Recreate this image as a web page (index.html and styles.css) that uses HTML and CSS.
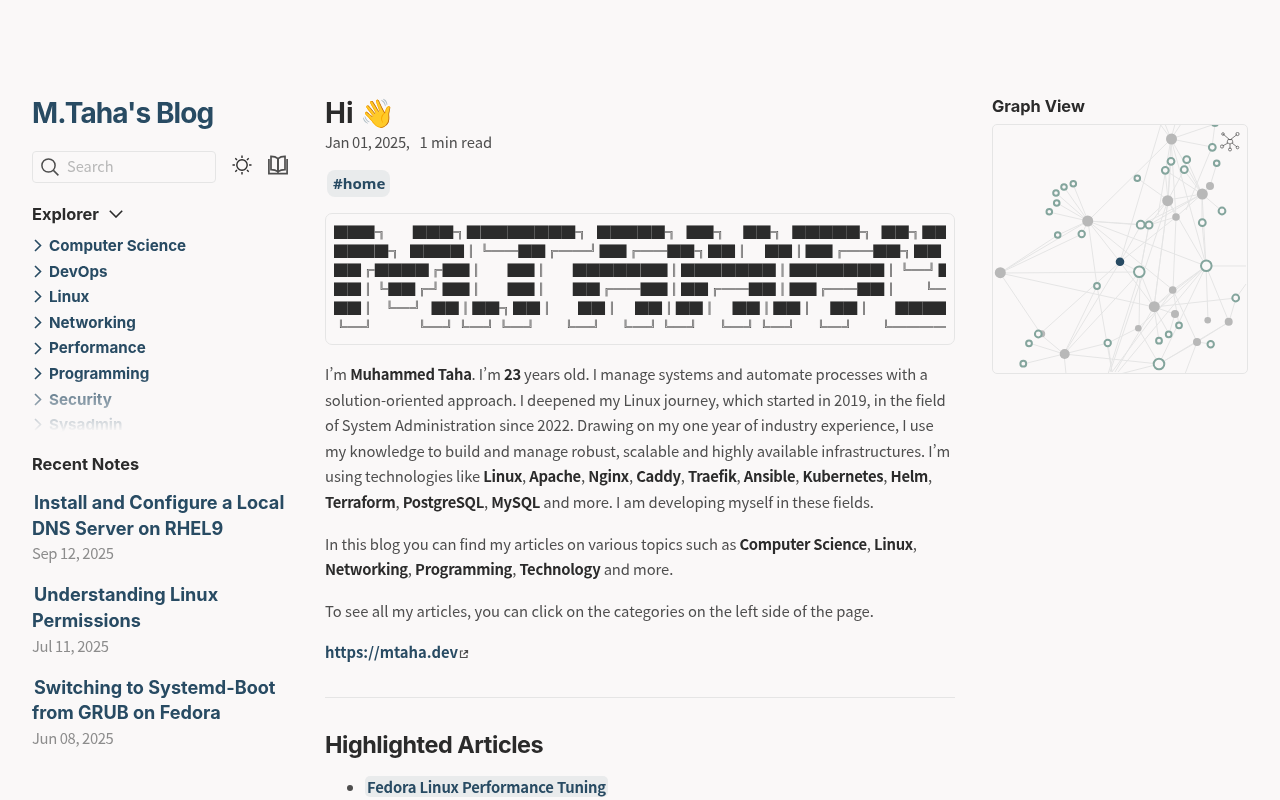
FILE: index.html
```html
<!DOCTYPE html>
<html lang="en">
<head>
<meta charset="utf-8">
<title>Hi</title>
<link rel="stylesheet" href="styles.css">
</head>
<body>
<div class="page">
  <aside class="left">
    <h2 class="site-title">M.Taha's Blog</h2>
    <div class="tools">
      <div class="search">
        <svg class="search-icon" viewBox="0 0 18 18" width="18" height="18"><circle cx="7.5" cy="7.5" r="6.6"/><path d="M12.4 12.4 17.4 17.4"/></svg>
        <span class="search-text">Search</span>
      </div>
      <svg class="sun" viewBox="0 0 20 20" width="20" height="20"><circle cx="10" cy="10" r="5.2"/><path d="M10 0.5v2.4M10 17.1v2.4M0.5 10h2.4M17.1 10h2.4M3.3 3.3l1.7 1.7M15 15l1.7 1.7M3.3 16.7 5 15M15 5l1.7-1.7"/></svg>
      <svg class="book" viewBox="0 0 20 20" width="20" height="20"><path d="M0.9 4v14.6h18.2V4"/><path d="M3 1.4c3 0 5.2.7 7 2.2v13c-1.8-1.3-4-2-7-2z"/><path d="M17 1.4c-3 0-5.2.7-7 2.2v13c1.8-1.3 4-2 7-2z"/></svg>
    </div>
    <div class="explorer-head">
      <h2 class="side-h">Explorer</h2>
      <svg class="fold" viewBox="0 0 14 8" width="14" height="8"><path d="M.8.8 7 7 13.2.8"/></svg>
    </div>
    <ul class="explorer">
      <li class="folder"><svg class="chev" viewBox="0 0 8 13" width="8" height="13"><path d="M1 1l5.5 5.5L1 12"/></svg><span>Computer Science</span></li>
      <li class="folder"><svg class="chev" viewBox="0 0 8 13" width="8" height="13"><path d="M1 1l5.5 5.5L1 12"/></svg><span>DevOps</span></li>
      <li class="folder"><svg class="chev" viewBox="0 0 8 13" width="8" height="13"><path d="M1 1l5.5 5.5L1 12"/></svg><span>Linux</span></li>
      <li class="folder"><svg class="chev" viewBox="0 0 8 13" width="8" height="13"><path d="M1 1l5.5 5.5L1 12"/></svg><span>Networking</span></li>
      <li class="folder"><svg class="chev" viewBox="0 0 8 13" width="8" height="13"><path d="M1 1l5.5 5.5L1 12"/></svg><span>Performance</span></li>
      <li class="folder"><svg class="chev" viewBox="0 0 8 13" width="8" height="13"><path d="M1 1l5.5 5.5L1 12"/></svg><span>Programming</span></li>
      <li class="folder"><svg class="chev" viewBox="0 0 8 13" width="8" height="13"><path d="M1 1l5.5 5.5L1 12"/></svg><span>Security</span></li>
      <li class="folder"><svg class="chev" viewBox="0 0 8 13" width="8" height="13"><path d="M1 1l5.5 5.5L1 12"/></svg><span>Sysadmin</span></li>
    </ul>
    <h2 class="side-h recent-h">Recent Notes</h2>
    <ul class="recent">
      <li><h3 class="note-title"><a>Install and Configure a Local DNS Server on RHEL9</a></h3><p class="note-date">Sep 12, 2025</p></li>
      <li><h3 class="note-title"><a>Understanding Linux Permissions</a></h3><p class="note-date">Jul 11, 2025</p></li>
      <li><h3 class="note-title"><a>Switching to Systemd-Boot from GRUB on Fedora</a></h3><p class="note-date">Jun 08, 2025</p></li>
    </ul>
  </aside>

  <main class="center">
    <h1 class="title">Hi <span class="emoji">👋</span></h1>
    <p class="meta"><span class="date">Jan 01, 2025,</span><span class="meta-sep"></span>1 min read</p>
    <div class="tags"><a class="tag">#home</a></div>
    <pre class="ascii"><code>███╗   ███╗████████╗ █████╗ ██╗  ██╗ █████╗ ██╗███████╗
████╗ ████║╚══██╔══╝██╔══██╗██║  ██║██╔══██╗██║██╔════╝
██╔████╔██║   ██║   ███████║███████║███████║╚═╝███████╗
██║╚██╔╝██║   ██║   ██╔══██║██╔══██║██╔══██║   ╚════██║
██║ ╚═╝ ██║██╗██║   ██║  ██║██║  ██║██║  ██║   ███████║
╚═╝     ╚═╝╚═╝╚═╝   ╚═╝  ╚═╝╚═╝  ╚═╝╚═╝  ╚═╝   ╚══════╝</code></pre>
    <p class="body-p tight">I’m <b>Muhammed Taha</b>. I’m <b>23</b> years old. I manage systems and automate processes with a solution-oriented approach. I deepened my Linux journey, which started in 2019, in the field of System Administration since 2022. Drawing on my one year of industry experience, I use my knowledge to build and manage robust, scalable and highly available infrastructures. I’m using technologies like <b>Linux</b>, <b>Apache</b>, <b>Nginx</b>, <b>Caddy</b>, <b>Traefik</b>, <b>Ansible</b>, <b>Kubernetes</b>, <b>Helm</b>, <b>Terraform</b>, <b>PostgreSQL</b>, <b>MySQL</b> and more. I am developing myself in these fields.</p>
    <p class="body-p tight">In this blog you can find my articles on various topics such as <b>Computer Science</b>, <b>Linux</b>, <b>Networking</b>, <b>Programming</b>, <b>Technology</b> and more.</p>
    <p class="body-p">To see all my articles, you can click on the categories on the left side of the page.</p>
    <p class="body-p"><a class="ext">https://mtaha.dev<svg class="ext-icon" viewBox="0 0 10 10" width="10" height="10"><path d="M4 2H1.5v6.5H8V6"/><path d="M4.5 5.5 8.5 1.5M5.5 1.5h3v3"/></svg></a></p>
    <hr class="rule">
    <h2 class="section">Highlighted Articles</h2>
    <ul class="articles">
      <li><a class="internal">Fedora Linux Performance Tuning</a></li>
    </ul>
  </main>

  <aside class="right">
    <h3 class="side-h graph-h">Graph View</h3>
    <div class="graph">
      <svg class="graph-svg" viewBox="993 125 254 248" width="254" height="248">
        <path class="edges" d="M1171 139L1160 124M1171 139L1165 124M1171 139L1175 124M1171 139L1181 124M1171 139L1215 124M1171 139L1212 147M1171 139L1168 200M1171 139L1158 215M1171 139L1202 194M1171 139L1088 221M1171 139L1206 265M1171 139L1176 217M1137 178L1168 200M1215 124L1212 147M1212 147L1186 210M1088 221L1073 184M1088 221L1064 187M1088 221L1056 193M1088 221L1057 203M1088 221L1049 212M1088 221L1058 235M1088 221L1082 234M1088 221L1141 225M1088 221L1149 225M1088 221L1120 262M1088 221L1000 273M1000 273L1058 235M1000 273L1082 234M1088 221L1206 266M1088 221L1173 290M1088 221L1097 286M1168 200L1165 170M1168 200L1171 161M1168 200L1184 170M1168 200L1202 194M1168 200L1176 217M1168 200L1141 225M1168 200L1149 225M1168 200L1206 266M1168 200L1154 307M1202 194L1222 211M1202 194L1202 223M1202 194L1165 170M1202 194L1184 170M1202 194L1187 160M1202 194L1210 186M1202 194L1141 225M1202 194L1149 225M1202 194L1206 266M1202 194L1176 217M1210 186L1217 163M1176 217L1173 290M1176 217L1149 225M1176 217L1120 262M1120 262L1141 225M1120 262L1140 272M1120 262L1040 334M1120 262L1064 354M1120 262L1154 307M1120 262L1161 124M1000 273L1140 272M1000 273L1154 307M1000 273L1041 334M1140 272L1154 307M1140 272L1139 328M1140 272L1149 225M1140 272L1064 354M1140 272L1108 374M1206 266L1173 290M1206 266L1154 307M1206 266L1246 266M1206 266L1229 322M1206 266L1208 320M1206 266L1159 364M1206 266L1202 223M1206 266L1118 372M1206 266L1138 328M1154 307L1175 314M1154 307L1236 298M1154 307L1159 341M1154 307L1169 334M1154 307L1173 290M1154 307L1115 372M1154 307L1168 200M1173 290L1197 342M1173 290L1112 372M1173 290L1179 325M1175 314L1169 334M1138 328L1159 364M1138 328L1108 343M1108 343L1112 372M1108 343L1064 354M1097 286L1064 354M1097 286L1112 372M1064 354L1023 364M1064 354L1029 343M1064 354L1040 334M1064 354L1159 364M1064 354L1066 374M1159 364L1197 342M1159 364L1229 322M1159 364L1120 374M1197 342L1229 322M1197 342L1211 344M1197 342L1185 374M1236 298L1229 322M1236 298L1246 284M1168 200L1110 372M1149 225L1140 272"/>
        <g class="grey">
          <circle cx="1171.5" cy="139" r="5.5"/><circle cx="1167.7" cy="200.7" r="5.5"/><circle cx="1202.3" cy="194" r="5.5"/><circle cx="1210" cy="186" r="4"/><circle cx="1176" cy="217" r="3.8"/><circle cx="1087.7" cy="221" r="5.5"/><circle cx="1000.3" cy="272.7" r="5.5"/><circle cx="1172.7" cy="290" r="3.8"/><circle cx="1154.3" cy="306.7" r="5.5"/><circle cx="1175" cy="314" r="4"/><circle cx="1207.7" cy="320.3" r="3.3"/><circle cx="1228.7" cy="321.7" r="4"/><circle cx="1138.3" cy="328.3" r="3.3"/><circle cx="1197" cy="342" r="4"/><circle cx="1064.7" cy="354" r="5"/><circle cx="1041.7" cy="333.7" r="3.5"/>
        </g>
        <g class="rings">
          <circle cx="1215" cy="123" r="3"/><circle cx="1212.3" cy="147.3" r="3.4"/><circle cx="1216.7" cy="163.3" r="2.8"/><circle cx="1186.7" cy="159.7" r="3.4"/><circle cx="1171" cy="161.3" r="3.4"/><circle cx="1184.3" cy="169.7" r="3.4"/><circle cx="1165.3" cy="170.3" r="3.4"/><circle cx="1137.3" cy="178.3" r="2.8"/><circle cx="1073.3" cy="183.7" r="2.8"/><circle cx="1064" cy="187" r="2.8"/><circle cx="1056" cy="193" r="2.8"/><circle cx="1056.7" cy="203" r="2.8"/><circle cx="1049.3" cy="211.7" r="2.8"/><circle cx="1222" cy="211" r="3.4"/><circle cx="1202.3" cy="222.7" r="3.4"/><circle cx="1140.7" cy="224.7" r="3.9"/><circle cx="1149" cy="225" r="3.5"/><circle cx="1057.7" cy="235" r="2.8"/><circle cx="1081.7" cy="234" r="3.2"/><circle cx="1139.3" cy="271.7" r="5.3"/><circle cx="1206.3" cy="265.7" r="5.3"/><circle cx="1097" cy="286" r="2.9"/><circle cx="1235.7" cy="298" r="3.4"/><circle cx="1179" cy="325.3" r="2.9"/><circle cx="1168.7" cy="334.3" r="2.9"/><circle cx="1159" cy="340.7" r="2.9"/><circle cx="1210.7" cy="344.3" r="3.2"/><circle cx="1038.3" cy="334" r="3.4"/><circle cx="1029" cy="343.3" r="2.9"/><circle cx="1023.3" cy="363.7" r="2.9"/><circle cx="1107.7" cy="343" r="3.2"/><circle cx="1159" cy="364" r="5.3"/>
        </g>
        <circle class="current" cx="1120" cy="261.7" r="4.3"/>
      </svg>
      <svg class="global" viewBox="0 0 20 20" width="20" height="20"><path d="M10 8 3 2M10 8 17 2.5M8 11 2.5 14M12 11 17 15M10 12 10 17"/><path d="M8 7.5h4l1 3-3 1.5-3-1.5z"/><circle cx="3" cy="2" r="1.3"/><circle cx="17.5" cy="2" r="1.6"/><circle cx="2" cy="14.5" r="1.6"/><circle cx="10" cy="17.5" r="1.5"/><circle cx="17.5" cy="15.5" r="1.3"/></svg>
    </div>
  </aside>
</div>
</body>
</html>
```
FILE: styles.css
```css
* { box-sizing: border-box; }
html, body { margin: 0; padding: 0; height: 100%; overflow: hidden; }
body {
  background: #faf8f8;
  color: #4e4e4e;
  font-family: "Noto Sans CJK SC", "Noto Sans", sans-serif;
  font-size: 14.8px;
  font-feature-settings: "pwid";
  line-height: 25.6px;
}
h1, h2, h3, p, ul { margin: 0; padding: 0; }
ul { list-style: none; }
b { font-weight: 700; color: #2b2b2b; letter-spacing: -0.3px; }

.page {
  display: grid;
  grid-template-columns: 320px 640px 320px;
  height: 800px;
  will-change: transform;
}

/* left column */
.left { padding: 96px 32px 0; }
.site-title {
  font-family: Inter, "Liberation Sans", sans-serif;
  font-size: 28px;
  font-weight: 700;
  letter-spacing: -0.9px;
  line-height: 34px;
  color: #284b63;
}
.tools { display: flex; align-items: center; margin-top: 21px; height: 32px; }
.search {
  width: 184px;
  height: 32px;
  border: 1px solid #e5e5e5;
  border-radius: 4px;
  display: flex;
  align-items: center;
  padding-left: 8px;
  gap: 8px;
}
.search-icon { fill: none; stroke: #4e4e4e; stroke-width: 1.5; flex: none; }
.search-text { color: #b8b8b8; font-size: 14.6px; padding-bottom: 2px; }
.sun { margin: 0 0 4px 16px; fill: none; stroke: #2b2b2b; stroke-width: 1.4; flex: none; }
.book { margin: 0 0 4px 16px; fill: none; stroke: #4e4e4e; stroke-width: 1.7; flex: none; }
.explorer-head { display: flex; align-items: center; gap: 10px; margin-top: 19px; height: 24px; }
.side-h {
  font-family: Inter, "Liberation Sans", sans-serif;
  font-size: 16.4px;
  font-weight: 700;
  line-height: 24px;
  color: #2b2b2b;
}
.fold { fill: none; stroke: #2b2b2b; stroke-width: 1.6; }
.explorer {
  margin-top: 7px;
  height: 199px;
  overflow: hidden;
  -webkit-mask-image: linear-gradient(to bottom, #000 72%, transparent 100%);
  mask-image: linear-gradient(to bottom, #000 72%, transparent 100%);
}
.folder {
  display: flex;
  align-items: center;
  height: 25.6px;
  gap: 7px;
  padding-left: 2px;
  font-family: Inter, "Liberation Sans", sans-serif;
  font-weight: 700;
  font-size: 15.2px;
  color: #284b63;
}
.chev { fill: none; stroke: #284b63; stroke-width: 1.6; flex: none; }
.recent-h { margin-top: 20px; }
.recent { margin-top: 14px; }
.recent li { margin-bottom: 16.6px; }
.note-title {
  font-family: Inter, "Liberation Sans", sans-serif;
  font-size: 18.1px;
  font-weight: 700;
  line-height: 25.6px;
  color: #284b63;
}
.note-title a { padding: 0 2px; }
.note-date { color: #8c8c8c; line-height: 25.6px; margin-top: -1px; letter-spacing: -0.38px; }

/* centre column */
.center { padding: 96px 5px 0; overflow: hidden; }
.title {
  font-family: Inter, "Liberation Sans", sans-serif;
  font-size: 28px;
  font-weight: 700;
  line-height: 34px;
  color: #2b2b2b;
}
.emoji { font-family: "Noto Color Emoji", sans-serif; font-weight: 400; }
.meta { line-height: 25.6px; margin-top: -2px; }
.date { letter-spacing: -0.38px; }
.meta-sep { display: inline-block; width: 10px; }
.tags { margin-top: 15.4px; height: 27px; }
.tag {
  display: inline-block;
  margin-left: 2px;
  padding: 0 5px 0 6px;
  height: 27px;
  line-height: 27px;
  border-radius: 8px;
  background: rgba(143, 159, 169, 0.15);
  color: #284b63;
  font-family: "Noto Sans", sans-serif;
  font-weight: 700;
  font-size: 15px;
}
.ascii {
  margin: 16px 0 0;
  height: 132px;
  padding: 8px;
  border: 1px solid #e5e5e5;
  border-radius: 7px;
  color: #2b2b2b;
  font-feature-settings: normal;
  font-size: 13.55px;
  line-height: 19px;
  word-spacing: 5.13px;
}
.ascii code { display: block; overflow: hidden; font-family: "Noto Sans CJK SC", monospace; }
.body-p { margin-top: 16px; }
.tight { letter-spacing: -0.09px; }
.ext { color: #284b63; font-weight: 700; }
.ext-icon { fill: none; stroke: #4e4e4e; stroke-width: 1.2; margin-left: 1px; vertical-align: -1px; }
.rule { margin: 32px 0 0; border: 0; border-top: 1px solid #e5e5e5; }
.section {
  font-family: Inter, "Liberation Sans", sans-serif;
  font-size: 23.4px;
  font-weight: 700;
  letter-spacing: -0.45px;
  line-height: 30px;
  color: #2b2b2b;
  margin-top: 32px;
}
.articles { list-style: disc; padding-left: 40px; margin-top: 14px; }
.internal {
  background: rgba(143, 159, 169, 0.15);
  border-radius: 5px;
  padding: 0 2px;
  color: #284b63;
  font-weight: 700;
  letter-spacing: -0.2px;
}

/* right column */
.right { padding: 96px 32px 0; }
.graph-h { line-height: 20px; }
.graph {
  position: relative;
  margin-top: 8px;
  width: 256px;
  height: 250px;
  border: 1px solid #e5e5e5;
  border-radius: 5px;
  overflow: hidden;
}
.graph-svg { display: block; }
.edges { fill: none; stroke: #e5e5e5; stroke-width: 1; }
.grey { fill: #b8b8b8; }
.rings { fill: #faf8f8; stroke: #84a59d; stroke-width: 2; }
.current { fill: #284b63; }
.global {
  position: absolute;
  top: 7px;
  right: 7px;
  fill: none;
  stroke: #4e4e4e;
  stroke-width: 0.7;
}
```
